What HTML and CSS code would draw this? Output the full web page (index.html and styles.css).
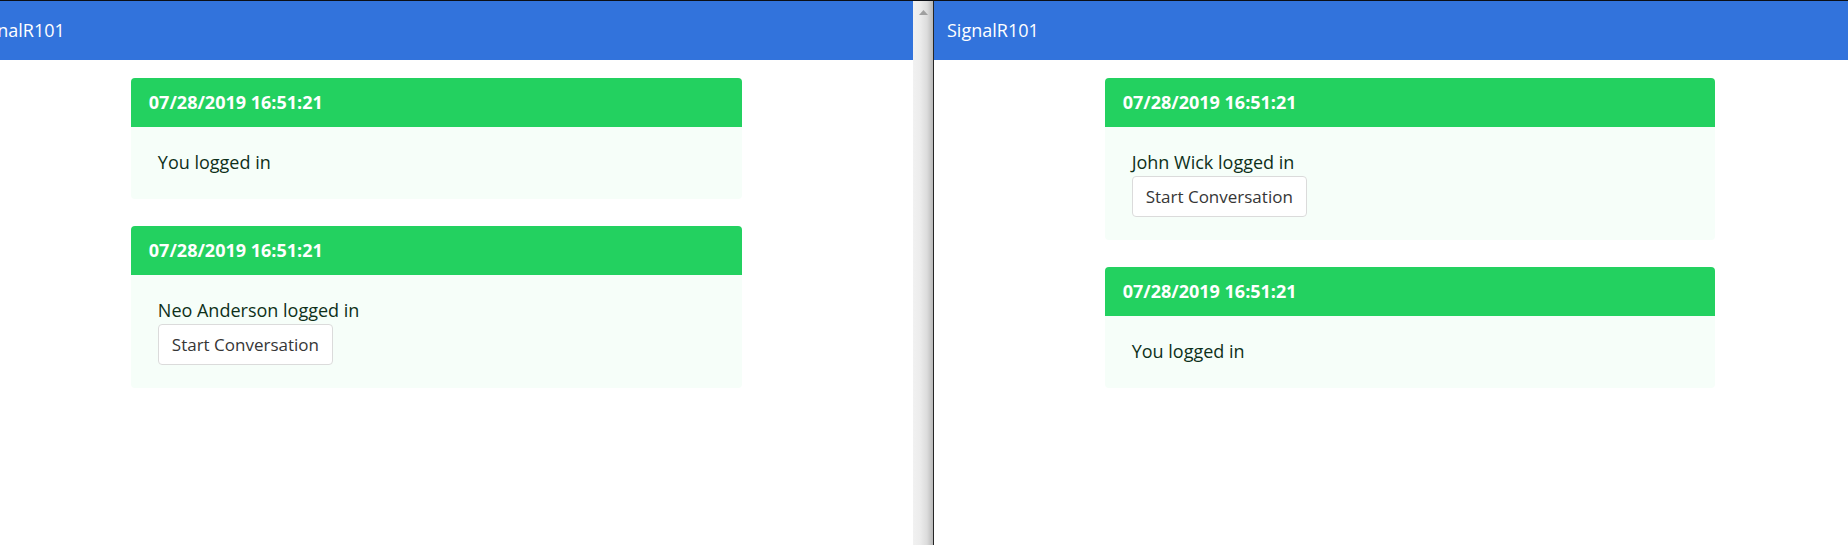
FILE: index.html
```html
<!DOCTYPE html>
<html lang="en">
<head>
<meta charset="utf-8">
<title>SignalR101</title>
<link rel="stylesheet" href="styles.css">
</head>
<body>
<div class="desktop">
  <section class="window">
    <div class="page page-scrolled">
      <nav class="navbar"><a class="brand" href="#">SignalR101</a></nav>
      <main class="messages">
        <article class="message">
          <header class="message-header">07/28/2019 16:51:21</header>
          <div class="message-body"><p>You logged in</p></div>
        </article>
        <article class="message">
          <header class="message-header">07/28/2019 16:51:21</header>
          <div class="message-body"><p>Neo Anderson logged in</p><button class="button" type="button">Start Conversation</button></div>
        </article>
      </main>
    </div>
  </section>
  <div class="scrollbar">
    <svg class="arrow" viewBox="0 0 9 5" aria-hidden="true"><path d="M4.5 0L9 5H0Z"/></svg>
  </div>
  <section class="window window-front">
    <div class="page">
      <nav class="navbar"><a class="brand" href="#">SignalR101</a></nav>
      <main class="messages">
        <article class="message">
          <header class="message-header">07/28/2019 16:51:21</header>
          <div class="message-body"><p>John Wick logged in</p><button class="button" type="button">Start Conversation</button></div>
        </article>
        <article class="message">
          <header class="message-header">07/28/2019 16:51:21</header>
          <div class="message-body"><p>You logged in</p></div>
        </article>
      </main>
    </div>
  </section>
</div>
</body>
</html>
```

FILE: styles.css
```css
* {
  box-sizing: border-box;
}

body {
  margin: 0;
  background: #fff;
  color: #4a4a4a;
  font-family: "Segoe UI", "Open Sans", "Noto Sans", sans-serif;
  font-size: 18px;
  line-height: 27px;
}

p {
  margin: 0;
}

.desktop {
  display: grid;
  grid-template-columns: calc(50% - 11px) 20px 1fr;
  min-height: 100vh;
  border-top: 1px solid #0c0f16;
}

.window {
  min-width: 0;
  overflow: hidden;
}

.window-front {
  border-left: 1px solid #252525;
}

/* Each page is wider than the part of its window that shows */
.page {
  width: calc(100% + 38px);
}

.page-scrolled {
  width: calc(100% + 40px);
  margin-left: -40px;
}

.navbar {
  display: flex;
  align-items: center;
  min-height: 59px;
  padding: 0 13px;
  background: #3273dc;
}

.brand {
  color: #fff;
  text-decoration: none;
}

.messages {
  display: flex;
  flex-direction: column;
  gap: 27px;
  width: 66.6667%;
  margin: 0 auto;
  padding: 18px 12px;
}

.message {
  overflow: hidden;
  border-radius: 4px;
  background: #f6fef9;
}

.message-header {
  padding: 11px 18px;
  background: #23d160;
  color: #fff;
  font-weight: 700;
}

.message-body {
  padding: 22px 27px 23px;
  color: #0e301a;
}

.button {
  display: block;
  height: 41px;
  padding: 0 13px;
  border: 1px solid #dbdbdb;
  border-radius: 4px;
  background: #fff;
  color: #363636;
  font: inherit;
  font-size: 17px;
}

.scrollbar {
  display: flex;
  justify-content: center;
  align-items: flex-start;
  padding-top: 9px;
  background: linear-gradient(to right, #f1f1f1 0%, #ececec 35%, #dcdcdc 70%, #b8b8b8 100%);
}

.arrow {
  width: 9px;
  height: 5px;
  fill: #a0a0a0;
}
```
